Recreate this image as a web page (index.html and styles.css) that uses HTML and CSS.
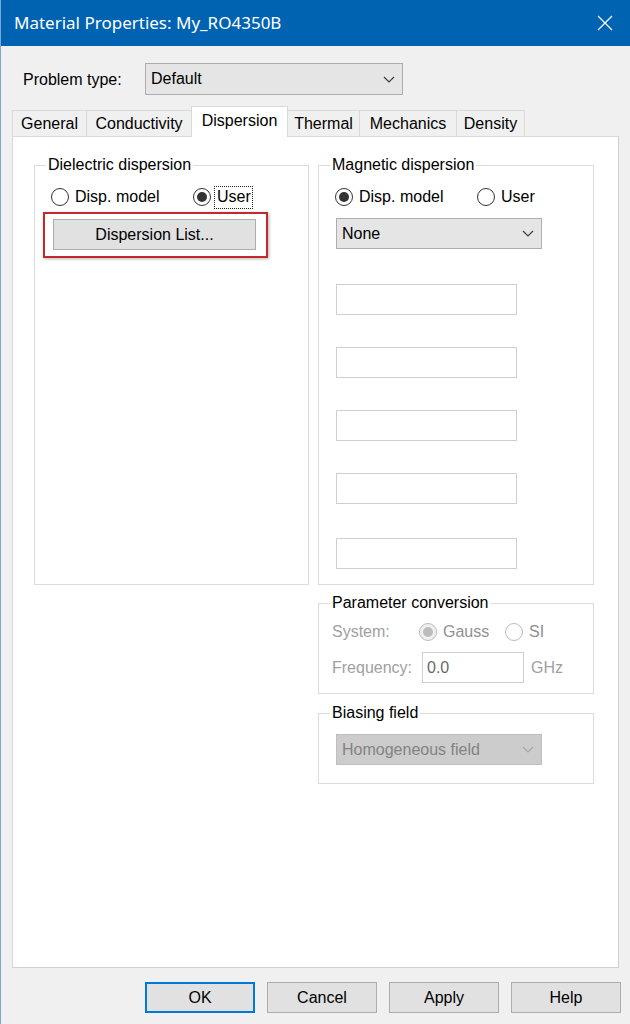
FILE: index.html
```html
<!DOCTYPE html>
<html>
<head>
<meta charset="utf-8">
<link rel="stylesheet" href="styles.css">
</head>
<body>
<div class="window">
  <div class="titlebar">
    <span class="title">Material Properties: My_RO4350B</span>
    <svg class="close" width="16" height="16" viewBox="0 0 16 16"><path d="M1 1 L15 15 M15 1 L1 15" stroke="#fff" stroke-width="1.3" fill="none"/></svg>
  </div>
  <div class="content">
    <div class="ptype">
      <span class="ptype-label">Problem type:</span>
      <div class="combo ptype-combo"><span>Default</span><svg class="chev" width="12" height="7" viewBox="0 0 12 7"><polyline points="1,1 6,6 11,1" fill="none" stroke="#3c3c3c" stroke-width="1.2"/></svg></div>
    </div>
    <div class="tabs">
      <div class="tab t-general">General</div>
      <div class="tab t-cond">Conductivity</div>
      <div class="tab t-disp active">Dispersion</div>
      <div class="tab t-therm">Thermal</div>
      <div class="tab t-mech">Mechanics</div>
      <div class="tab t-dens">Density</div>
    </div>
    <div class="panel">
      <div class="col">
        <div class="group tall">
          <div class="gtitle">Dielectric dispersion</div>
          <div class="radios">
            <div class="radio first"><span class="circle"></span><span class="rlabel">Disp. model</span></div>
            <div class="radio"><span class="circle on"></span><span class="rlabel focus">User</span></div>
          </div>
          <div class="hl"><div class="btn listbtn">Dispersion List...</div></div>
        </div>
      </div>
      <div class="col">
        <div class="group tall">
          <div class="gtitle">Magnetic dispersion</div>
          <div class="radios">
            <div class="radio first"><span class="circle on"></span><span class="rlabel">Disp. model</span></div>
            <div class="radio"><span class="circle"></span><span class="rlabel">User</span></div>
          </div>
          <div class="combo none-combo"><span>None</span><svg class="chev" width="12" height="7" viewBox="0 0 12 7"><polyline points="1,1 6,6 11,1" fill="none" stroke="#3c3c3c" stroke-width="1.2"/></svg></div>
          <div class="boxes">
            <div class="tbox"></div>
            <div class="tbox"></div>
            <div class="tbox"></div>
            <div class="tbox"></div>
            <div class="tbox last"></div>
          </div>
        </div>
        <div class="group param">
          <div class="gtitle">Parameter conversion</div>
          <div class="prow sys">
            <span class="plabel">System:</span>
            <div class="radio gauss"><span class="circle dis on"></span><span class="rlabel dtext">Gauss</span></div>
            <div class="radio"><span class="circle dis"></span><span class="rlabel dtext">SI</span></div>
          </div>
          <div class="prow freq">
            <span class="plabel flabel">Frequency:</span>
            <div class="tbox fbox">0.0</div>
            <span class="ghz">GHz</span>
          </div>
        </div>
        <div class="group bias">
          <div class="gtitle">Biasing field</div>
          <div class="combo dis-combo"><span>Homogeneous field</span><svg class="chev" width="12" height="7" viewBox="0 0 12 7"><polyline points="1,1 6,6 11,1" fill="none" stroke="#a8a8a8" stroke-width="1.2"/></svg></div>
        </div>
      </div>
    </div>
    <div class="buttons">
      <div class="btn dlg default">OK</div>
      <div class="btn dlg">Cancel</div>
      <div class="btn dlg">Apply</div>
      <div class="btn dlg">Help</div>
    </div>
  </div>
</div>
</body>
</html>
```
FILE: styles.css
```css
* { box-sizing: border-box; }
html, body { margin: 0; padding: 0; }
body { font-family: "Liberation Sans", Arial, sans-serif; font-size: 16px; color: #000; background: #f0f0f0; }

.window { width: 630px; height: 1024px; background: #f0f0f0; border-left: 1px solid #7ea7d8; overflow: hidden; }

.titlebar { height: 46px; background: #0063b1; display: flex; align-items: center; justify-content: space-between; padding: 0 17px 0 13px; }
.title { font-family: "Noto Sans", "Open Sans", sans-serif; font-size: 17px; color: #fff; padding-bottom: 1px; }
.close { display: block; }

.content { padding: 0 9px 0 11px; }

.ptype { display: flex; align-items: center; margin-top: 17px; height: 32px; }
.ptype-label { width: 133px; padding-left: 11px; padding-top: 2px; }

.combo { display: flex; align-items: center; justify-content: space-between; background: #e5e5e5; border: 1px solid #adadad; padding: 0 7px 0 5px; }
.ptype-combo { width: 258px; height: 32px; }
.chev { display: block; }

.tabs { display: flex; align-items: flex-end; height: 30px; margin-top: 11px; }
.tab { height: 26px; border: 1px solid #d9d9d9; border-bottom: none; background: #f0f0f0; display: flex; align-items: center; justify-content: center; margin-left: -1px; padding-top: 1px; }
.tab:first-child { margin-left: 0; }
.tab.active { height: 31px; background: #fff; margin-bottom: -1px; position: relative; z-index: 1; padding-top: 0; padding-bottom: 3px; }
.t-general { width: 75px; }
.t-cond { width: 106px; }
.t-disp { width: 97px; }
.t-therm { width: 73px; }
.t-mech { width: 98px; }
.t-dens { width: 69px; }

.panel { width: 607px; height: 832px; background: #fff; border: 1px solid #d9d9d9; border-right-color: #d0d0d0; border-bottom-color: #d0d0d0; display: grid; grid-template-columns: 275px 276px; column-gap: 9px; align-content: start; padding: 28px 0 0 21px; }
.col { display: flex; flex-direction: column; }

.group { border: 1px solid #dcdcdc; display: flex; flex-direction: column; align-items: flex-start; }
.group.tall { height: 420px; }
.gtitle { margin-top: -10px; margin-left: 11px; height: 18px; line-height: 18px; padding: 0 2px; background: #fff; white-space: nowrap; }

.radios { display: flex; align-items: center; height: 22px; margin-top: 12px; padding-left: 16px; }
.radio { display: flex; align-items: center; }
.radio.first { width: 142px; }
.circle { width: 18px; height: 18px; border: 1px solid #333; border-radius: 50%; background: #fff; display: flex; align-items: center; justify-content: center; flex: none; }
.circle.on::after { content: ""; width: 10px; height: 10px; border-radius: 50%; background: #333; }
.rlabel { margin-left: 6px; line-height: 18px; }
.rlabel.focus { margin-left: 3px; border: 1px dotted #222; padding: 1px 1px 2px 2px; }

.hl { margin-top: 4px; margin-left: 8px; width: 225px; height: 46px; border: 2px solid #c3282e; box-shadow: 1px 1px 3px rgba(0,0,0,0.3); padding: 5px 0 0 8px; }
.btn { background: #e1e1e1; border: 1px solid #adadad; display: flex; align-items: center; justify-content: center; }
.listbtn { width: 203px; height: 31px; }

.none-combo { width: 206px; height: 31px; margin-top: 10px; margin-left: 17px; }
.boxes { display: flex; flex-direction: column; gap: 32px; margin-top: 35px; margin-left: 17px; }
.tbox { width: 181px; height: 31px; border: 1px solid #cfcfcf; background: #fff; }
.tbox.last { margin-top: 2px; }

.group.param { height: 91px; margin-top: 18px; }
.prow { display: flex; align-items: center; margin-left: 13px; }
.sys { height: 20px; margin-top: 10px; }
.plabel { color: #a0a0a0; width: 87px; }
.flabel { width: 90px; }
.radio.gauss { width: 86px; }
.circle.dis { border-color: #bcbcbc; }
.circle.dis.on { background: #f0f0f0; }
.circle.dis.on::after { background: #bcbcbc; }
.dtext { color: #8f8f8f; }
.freq { margin-top: 10px; height: 31px; }
.fbox { width: 102px; height: 31px; display: flex; align-items: center; padding-left: 4px; color: #6a6a6a; }
.ghz { color: #a0a0a0; margin-left: 7px; }

.group.bias { height: 71px; margin-top: 19px; }
.dis-combo { width: 206px; height: 31px; margin-top: 12px; margin-left: 17px; background: #cccccc; border-color: #bfbfbf; color: #838383; }

.buttons { display: flex; justify-content: flex-end; gap: 12px; margin-top: 14px; }
.dlg { width: 110px; height: 31px; }
.dlg.default { border: 2px solid #0078d7; }
```
